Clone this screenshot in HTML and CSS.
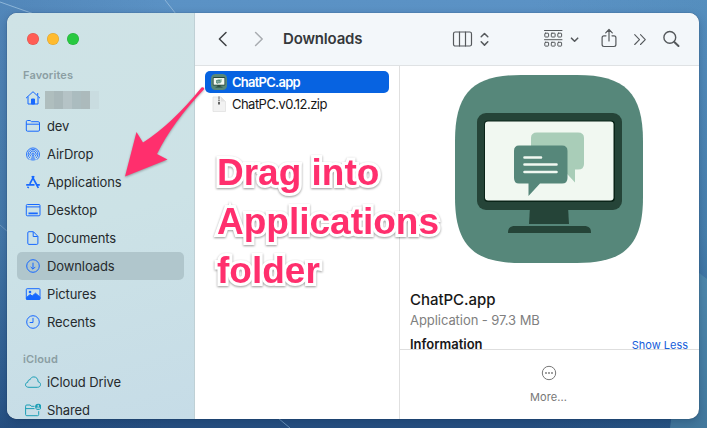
FILE: index.html
```html
<!DOCTYPE html>
<html lang="en">
<head>
<meta charset="utf-8">
<title>Downloads</title>
<link rel="stylesheet" href="styles.css">
</head>
<body>
<svg class="defs" width="0" height="0">
  <symbol id="app-icon" viewBox="0 0 188 188">
    <path d="M0 66C0 18 18 0 66 0H122C170 0 188 18 188 66V122C188 170 170 188 122 188H66C18 188 0 170 0 122Z" fill="#56877a"/>
    <path d="M75 132H113L114 149H74Z" fill="#254438"/>
    <path d="M53 158C53 153 55 151 60 151H129C134 151 136 153 136 158Z" fill="#254438"/>
    <rect x="22" y="38" width="145" height="97" rx="9" fill="#254438"/>
    <rect x="29" y="45.500" width="131" height="81.500" rx="4" fill="#0a2418"/>
    <rect x="30" y="46.500" width="128.500" height="79" rx="3" fill="#f1f8f1"/>
    <path d="M82 57.500H123Q129 57.500 129 63V89Q129 94.500 123 94.500H120V107.500L108 94.500H82Q76 94.500 76 89V63Q76 57.500 82 57.500Z" fill="#a9cdb8"/>
    <path d="M64 70.500H107Q112.500 70.500 112.500 76V103Q112.500 108.500 107 108.500H85L73.500 121V108.500H64Q59 108.500 59 103V76Q59 70.500 64 70.500Z" fill="#56877a"/>
    <path d="M69.500 82.500H86M69.500 89.500H101.500M69.500 97H101.500" stroke="#f1f8f1" stroke-width="2.600" stroke-linecap="round"/>
  </symbol>
</svg>
<div class="desktop">
  <svg class="streaks" viewBox="0 0 707 428" fill="none">
    <path d="M0 2L34 14M165 0L176 14" stroke="#8db5d8" stroke-width="1"/>
    <path d="M0 225L8 232M278 418L290 428" stroke="#6d96bd" stroke-width="1"/>
    <path d="M690 266L707 279V428H670Z" fill="#5c9ab4" fill-opacity=".5"/>
  </svg>
  <main class="window">
    <aside class="sidebar">
      <div class="lights"><i class="red"></i><i class="yellow"></i><i class="green"></i></div>
      <h2>Favorites</h2>
      <ul>
        <li><svg viewBox="0 0 16 16"><path d="M1 8.200L8 1.700L15 8.200M3 6.500V14H13V6.500M12.700 5.700V3"/><path d="M6.500 14V9H9.500V14Z" fill="currentColor"/></svg><span class="redacted"></span></li>
        <li><svg viewBox="0 0 16 16"><path d="M1.300 12V3.700Q1.300 2.500 2.500 2.500H5.200L6.500 3.700H13.200Q14.500 3.700 14.500 5V12Q14.500 13.200 13.200 13.200H2.500Q1.300 13.200 1.300 12ZM1.300 6.200H14.500"/></svg><span>dev</span></li>
        <li><svg viewBox="0 0 16 16" stroke-width=".9"><path d="M4.200 13.700A6.500 6.500 0 1 1 11.800 13.700M5 12A4.800 4.800 0 1 1 11 12M6 10.500A3.100 3.100 0 1 1 10 10.500"/><path d="M5 14L8 8.500L11 14Q8 15.500 5 14Z" fill="currentColor" stroke="none" opacity=".55"/><circle cx="8" cy="8.200" r="1.200"/></svg><span>AirDrop</span></li>
        <li><svg viewBox="0 0 16 16" stroke-width="1.700"><path d="M7 2.200L12.600 12.500M9 2.200L4.800 9.800M1.200 10.800H9.500M12 10.800H14.800M3.500 12.700L2.700 14M12.600 12.500L13.300 14"/></svg><span>Applications</span></li>
        <li><svg viewBox="0 0 16 16"><rect x="1.300" y="2.500" width="13.700" height="11.300" rx="1"/><path d="M1.300 4.900H15"/><path d="M3.500 11.300H12.800" stroke-width="1.700"/></svg><span>Desktop</span></li>
        <li><svg viewBox="0 0 16 16"><path d="M2.800 13.200V2.800Q2.800 1.700 3.900 1.700H8.400L12.900 6.300V13.200Q12.900 14.400 11.800 14.400H3.900Q2.800 14.400 2.800 13.200ZM8.200 1.900V6.500H12.700"/></svg><span>Documents</span></li>
        <li class="active"><svg viewBox="0 0 16 16"><circle cx="8" cy="8" r="6.300"/><path d="M8 4.700V11M5.700 8.900L8 11.200L10.300 8.900"/></svg><span>Downloads</span></li>
        <li><svg viewBox="0 0 16 16"><rect x="1.300" y="2.700" width="13.700" height="10.800" rx=".8"/><path d="M1.500 13.200V11.500L5.200 8.500L7.200 10L10.500 7.200L14.900 11V13.200Z" fill="currentColor"/><circle cx="5" cy="6" r="1.300" fill="currentColor" stroke="none"/></svg><span>Pictures</span></li>
        <li><svg viewBox="0 0 16 16"><circle cx="8" cy="8" r="6.300"/><path d="M8 3.900V8.500H4.700"/></svg><span>Recents</span></li>
      </ul>
      <h2 class="cloud-title">iCloud</h2>
      <ul class="cloud">
        <li><svg viewBox="0 0 16 16"><path d="M4 13.300H12.300C14.300 13.300 15.500 12.200 15.500 10.500C15.500 9 14.500 8 13.100 7.800C13.200 5 11.300 2.900 8.900 2.900C6.900 2.900 5.600 4.100 5.100 5.700C3.500 5.600 2.700 6.900 2.900 8.200C1.300 8.500.5 9.500.5 10.800C.5 12.300 1.800 13.300 4 13.300Z"/></svg><span>iCloud Drive</span></li>
        <li><svg viewBox="0 0 16 16"><path d="M9.500 4.300H6.300L5.200 3H1.800Q.6 3 .6 4.200V12.500Q.6 13.700 1.800 13.700H12.500Q13.700 13.700 13.700 12.500V9.200M.6 6.600H9.500"/><circle cx="13.200" cy="4.800" r="3.100" fill="currentColor" stroke="none"/><path d="M13.200 3.500V4.300M12 6.200H14.400" stroke="#c9dee7" stroke-linecap="round" stroke-width="1.300"/></svg><span>Shared</span></li>
      </ul>
    </aside>
    <section class="main">
      <header class="toolbar">
        <svg class="nav" viewBox="0 0 50 20" fill="none" stroke-width="1.500" stroke-linecap="round" stroke-linejoin="round"><path d="M9 3.500L2.400 10L9 16.500" stroke="#3e4144"/><path d="M38.600 3.500L45.200 10L38.600 16.500" stroke="#a8acb0"/></svg>
        <h1>Downloads</h1>
        <svg class="tools" viewBox="0 0 230 24" fill="none" stroke="#55595c" stroke-width="1.200" stroke-linecap="round" stroke-linejoin="round">
          <rect x="1.500" y="5" width="18" height="14" rx="1.800"/><path d="M7.500 5V19M13.500 5V19"/>
          <path d="M29.200 9.800L32.500 6.500L35.800 9.800M29.200 14.800L32.500 18.100L35.800 14.800" stroke-width="1.500"/>
          <path d="M92.500 3.500H110M92.500 12.700H110" stroke-width="1"/>
          <g stroke-width="1"><rect x="92.800" y="6.200" width="3.800" height="3.800" rx=".6"/><rect x="99.300" y="6.200" width="3.800" height="3.800" rx=".6"/><rect x="105.800" y="6.200" width="3.800" height="3.800" rx=".6"/><rect x="92.800" y="15.300" width="3.800" height="3.800" rx=".6"/><rect x="99.300" y="15.300" width="3.800" height="3.800" rx=".6"/><rect x="105.800" y="15.300" width="3.800" height="3.800" rx=".6"/></g>
          <path d="M119.500 11.200L122.600 14.200L125.700 11.200" stroke-width="1.600"/>
          <path d="M154 8.800H152Q150.100 8.800 150.100 10.700V17.600Q150.100 19.500 152 19.500H162Q163.900 19.500 163.900 17.600V10.700Q163.900 8.800 162 8.800H160M157 14V2.700M153.700 5.800L157 2.500L160.300 5.800"/>
          <path d="M182.700 7.700L187.500 12.600L182.700 17.500M188.500 7.700L193.300 12.600L188.500 17.500" stroke-width="1.100"/>
          <circle cx="217.800" cy="10.400" r="5.900" stroke-width="1.400"/><path d="M222.300 15L226.500 19" stroke-width="2"/>
        </svg>
      </header>
      <div class="columns">
        <div class="files">
          <div class="file selected"><svg><use href="#app-icon"/></svg><span>ChatPC.app</span></div>
          <div class="file archive"><svg viewBox="0 0 16 16"><path d="M2 1H10L14.500 5.500V15.500H2Z" fill="#f2f2f2" stroke="#dedede" stroke-width=".7"/><path d="M10 1V5.500H14.500" fill="#e2e2e2"/><path d="M8 .5V8" stroke="#888" stroke-width="1.800" stroke-dasharray="1.200 .6"/><path d="M8 6V8.500" stroke="#666" stroke-width="2"/></svg><span>ChatPC.v0.12.zip</span></div>
        </div>
        <div class="preview">
          <div class="details">
            <svg class="big-icon"><use href="#app-icon"/></svg>
            <h3>ChatPC.app</h3>
            <p>Application - 97.3 MB</p>
            <div class="info"><b>Information</b><a>Show Less</a></div>
          </div>
          <div class="more">
            <svg viewBox="0 0 16 16" fill="none" stroke="#777"><circle cx="8" cy="8" r="6.700"/><g fill="#777" stroke="none"><circle cx="5" cy="8" r=".9"/><circle cx="8" cy="8" r=".9"/><circle cx="11" cy="8" r=".9"/></g></svg>
            <span>More...</span>
          </div>
        </div>
      </div>
    </section>
  </main>
  <svg class="arrow" viewBox="0 0 707 428"><path d="M201.500 87.500Q204 86.500 204.300 89Q172 123 157 154L167.500 159.500L125 176.500L136.500 132L143 142.500Q172 124 201.500 87.500Z" fill="#ff2f6d"/></svg>
  <div class="callout">Drag into<br>Applications<br>folder</div>
</div>
</body>
</html>
```
FILE: styles.css
```css
* { box-sizing: border-box; }
body { margin: 0; font-family: Inter, "Liberation Sans", sans-serif; font-size: 13px; color: #252a2d; }
h1, h2, h3, p, ul { margin: 0; padding: 0; list-style: none; }
.defs { position: absolute; }
.desktop { position: relative; width: 707px; height: 428px; padding: 13px 8px 9px 7px; overflow: hidden; background: linear-gradient(90deg, rgba(30,70,120,.15), transparent 25%, transparent 75%, rgba(50,120,150,.15)), linear-gradient(#5b92c5, #4a80b0 55%, #2d5b8e 94%, #264f80); }
.streaks { position: absolute; left: 0; top: 0; width: 707px; height: 428px; }
.window { position: relative; display: flex; width: 692px; height: 406px; border-radius: 10px; overflow: hidden; background: #fff; box-shadow: 0 0 1px rgba(0,20,50,.7), 0 3px 9px rgba(0,25,60,.25); }
.sidebar { width: 188px; flex: none; padding: 20px 10px 0 10px; border-right: 1px solid #bfd0d5; background: linear-gradient(165deg, #cfe3e6, #cce2e6 50%, #c6dce7); }
.lights { display: flex; gap: 8px; padding-left: 10px; }
.lights i { width: 12px; height: 12px; border-radius: 50%; box-shadow: inset 0 0 0 .5px rgba(0,0,0,.15); }
.red { background: #ff5d55; }
.yellow { background: #ffbb2e; }
.green { background: #28c941; }
h2 { height: 14px; margin: 23px 0 0 6px; font-size: 11px; line-height: 14px; font-weight: 600; color: #8b9ea3; letter-spacing: .12px; }
.sidebar ul { padding-top: 1px; }
h2 + ul { margin-top: 1px; }
.sidebar li { display: flex; align-items: center; gap: 6px; height: 28px; padding-left: 8px; border-radius: 5px; color: #252a2d; letter-spacing: -.1px; }
.sidebar li svg { width: 16px; height: 16px; flex: none; color: #1769ff; fill: none; stroke: currentColor; stroke-linejoin: round; }
.sidebar .cloud svg { color: #1b9eb5; }
.sidebar .active { background: #b0c6cc; }
.redacted { width: 54px; height: 18px; margin: 4px 0 0 -2px; background: linear-gradient(90deg, #afbebe 0 9px, #a9b8ba 9px 18px, #b5c3c6 18px 27px, #abbcbf 27px 36px, #acbabc 36px 45px, #c9dce0 45px); }
.sidebar .cloud-title { margin-top: 16px; }
.main { flex: 1; min-width: 0; display: flex; flex-direction: column; }
.toolbar { height: 53px; flex: none; display: flex; align-items: center; padding-left: 22px; background: #f3f7fa; border-bottom: 1px solid #dfe2e4; }
.nav { width: 50px; height: 20px; }
h1 { width: 169px; margin-left: 16px; font-size: 15px; line-height: 20px; font-weight: 600; color: #35383b; letter-spacing: -.18px; }
.tools { width: 230px; height: 24px; flex: none; }
.columns { flex: 1; min-height: 0; display: flex; }
.files { width: 205px; flex: none; padding: 5px 10px 0 10px; border-right: 1px solid #e0e0e0; }
.file { display: flex; align-items: center; gap: 5px; height: 22px; padding-left: 6px; border-radius: 5px; }
.archive { letter-spacing: -.53px; color: #171717; }
.file svg { width: 16px; height: 16px; flex: none; }
.selected { background: #0763e1; color: #fff; font-weight: 600; letter-spacing: -.75px; }
.preview { flex: 1; min-width: 0; display: flex; flex-direction: column; }
.details { height: 284px; padding: 9px 11px 0 10px; overflow: hidden; border-bottom: 1px solid #dedede; }
.big-icon { display: block; width: 188px; height: 188px; margin-left: 45px; }
h3 { margin-top: 27px; font-size: 15px; line-height: 20px; font-weight: 500; color: #171717; letter-spacing: -.05px; }
.details p { line-height: 16px; margin-top: 2px; color: #808080; letter-spacing: -.06px; }
.info { display: flex; justify-content: space-between; align-items: baseline; margin-top: 8px; line-height: 16px; color: #171717; }
.info b { font-weight: 600; }
.info a { font-size: 11px; color: #165dda; }
.more { flex: 1; display: flex; flex-direction: column; align-items: center; padding: 15px 2px 0 0; font-size: 11px; color: #777; }
.more svg { width: 16px; height: 16px; }
.more span { line-height: 14px; margin-top: 9px; letter-spacing: .1px; }
.arrow { position: absolute; left: 0; top: 0; width: 707px; height: 428px; filter: drop-shadow(0 1px 1px rgba(0,0,0,.3)); }
.callout { position: absolute; left: 217px; top: 148px; font: bold 37px/49px "Liberation Sans", Arial, sans-serif; color: #ff2f6d; -webkit-text-stroke: 6px #fff; paint-order: stroke fill; filter: drop-shadow(0 1px 1px rgba(0,0,0,.4)); }
```
